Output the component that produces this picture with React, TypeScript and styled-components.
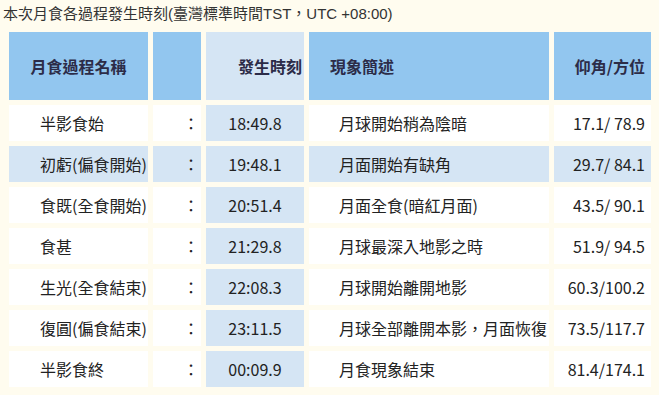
import { createGlobalStyle } from "styled-components";
import styled from "styled-components";

interface EclipseStage {
  name: string;
  time: string;
  description: string;
  position: string;
}

const stages: EclipseStage[] = [
  { name: "半影食始", time: "18:49.8", description: "月球開始稍為陰暗", position: "17.1/ 78.9" },
  { name: "初虧(偏食開始)", time: "19:48.1", description: "月面開始有缺角", position: "29.7/ 84.1" },
  { name: "食既(全食開始)", time: "20:51.4", description: "月面全食(暗紅月面)", position: "43.5/ 90.1" },
  { name: "食甚", time: "21:29.8", description: "月球最深入地影之時", position: "51.9/ 94.5" },
  { name: "生光(全食結束)", time: "22:08.3", description: "月球開始離開地影", position: "60.3/100.2" },
  { name: "復圓(偏食結束)", time: "23:11.5", description: "月球全部離開本影，月面恢復", position: "73.5/117.7" },
  { name: "半影食終", time: "00:09.9", description: "月食現象結束", position: "81.4/174.1" },
];

const HIGHLIGHT_ROW = 1;

export default function App() {
  return (
    <>
      <GlobalStyle />
      <StPage>
        <StTitle>本次月食各過程發生時刻(臺灣標準時間TST，UTC +08:00)</StTitle>
        <StTable>
          <colgroup>
            <col style={{ width: 139 }} />
            <col style={{ width: 48 }} />
            <col style={{ width: 98 }} />
            <col style={{ width: 240 }} />
            <col style={{ width: 97 }} />
          </colgroup>
          <thead>
            <tr>
              <StHeadCell $align="center">月食過程名稱</StHeadCell>
              <StHeadCell $align="center" />
              <StHeadCell $align="right" $light $pad="0 2px 0 0">
                發生時刻
              </StHeadCell>
              <StHeadCell $align="left" $pad="0 0 0 21px">
                現象簡述
              </StHeadCell>
              <StHeadCell $align="right" $pad="0 6px 0 0">
                仰角/方位
              </StHeadCell>
            </tr>
          </thead>
          <tbody>
            {stages.map((stage, i) => {
              const hl = i === HIGHLIGHT_ROW;
              return (
                <tr key={stage.name + stage.time}>
                  <StCell $align="left" $pad="0 0 0 31px" $light={hl}>
                    {stage.name}
                  </StCell>
                  <StCell $align="right" $pad="0 2px 0 0" $light={hl}>
                    ：
                  </StCell>
                  <StCell $align="center" $light>
                    {stage.time}
                  </StCell>
                  <StCell $align="left" $pad="0 0 0 30px" $light={hl}>
                    {stage.description}
                  </StCell>
                  <StCell $align="right" $pad="0 6px 0 0" $light={hl}>
                    {stage.position}
                  </StCell>
                </tr>
              );
            })}
          </tbody>
        </StTable>
      </StPage>
    </>
  );
}

const GlobalStyle = createGlobalStyle`
  html, body {
    margin: 0;
    padding: 0;
    background-color: #fffcef;
  }
`;

const StPage = styled.main`
  display: flex;
  flex-direction: column;

  width: 659px;
  height: 395px;
  overflow: hidden;

  padding: 0 0 0 4px;
  box-sizing: border-box;

  background-color: #fffcef;
`;

const StTitle = styled.h1`
  margin: 0;
  padding: 5px 0 0 0;
  margin-left: -1px;

  height: 22px;

  font-family: "Liberation Sans", "Noto Sans CJK TC", sans-serif;
  font-size: 15px;
  font-weight: 400;
  line-height: 18px;
  color: #333333;
  white-space: nowrap;
`;

const StTable = styled.table`
  border-collapse: separate;
  border-spacing: 5px;
  table-layout: fixed;

  width: 652px;
`;

interface CellProps {
  $align: "left" | "center" | "right";
  $pad?: string;
  $light?: boolean;
}

const StHeadCell = styled.th<CellProps>`
  height: 68px;
  padding: ${({ $pad }) => $pad ?? "0"};

  background-color: ${({ $light }) => ($light ? "#d5e5f4" : "#92c6ef")};

  font-family: "Noto Sans CJK TC", "Liberation Sans", sans-serif;
  font-size: 16px;
  font-weight: 700;
  line-height: 20px;
  text-align: ${({ $align }) => $align};
  color: #2c2c48;
  white-space: nowrap;
`;

const StCell = styled.td<CellProps>`
  height: 36px;
  padding: ${({ $pad }) => $pad ?? "0"};

  background-color: ${({ $light }) => ($light ? "#d5e5f4" : "#ffffff")};

  font-family: "Noto Sans CJK TC", "Liberation Sans", sans-serif;
  font-size: 16px;
  font-weight: 400;
  line-height: 20px;
  text-align: ${({ $align }) => $align};
  color: #222222;
  white-space: nowrap;
  overflow: hidden;
`;
